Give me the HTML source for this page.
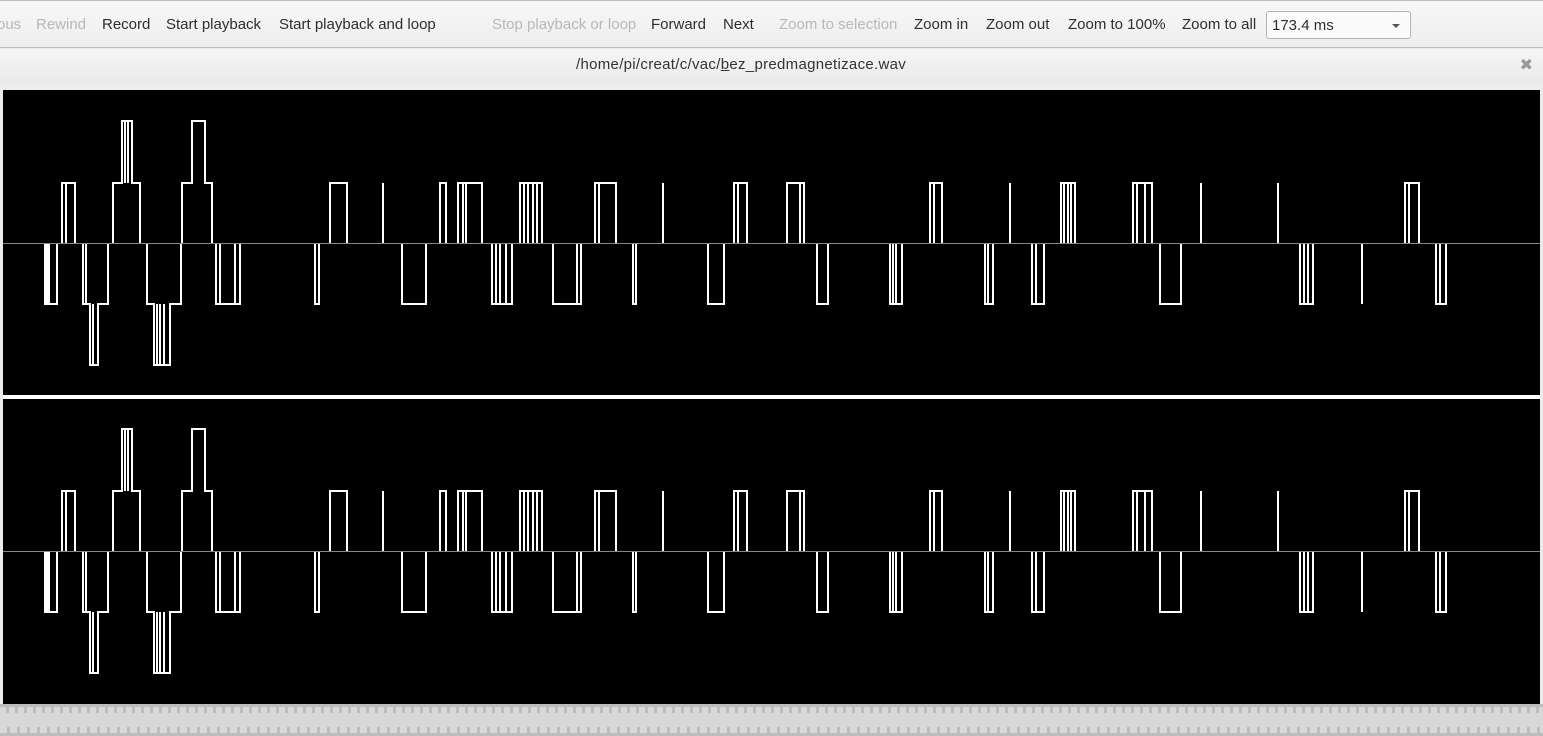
<!DOCTYPE html>
<html><head><meta charset="utf-8"><style>
body{margin:0;width:1543px;height:736px;overflow:hidden;background:#ececec;font-family:"Liberation Sans",sans-serif;position:relative}
#tb{position:absolute;left:0;top:0;width:1543px;height:48px;background:linear-gradient(#f7f7f7,#eeeeee);border-top:1px solid #bdbdbd;border-bottom:1px solid #bdbdbd;box-sizing:border-box}
#tb span{position:absolute;top:15px;font-size:15px;color:#2e2e2e;white-space:nowrap}
#tb span.g{color:#b8b8b8}
#combo{position:absolute;left:1266px;top:10px;width:145px;height:28px;border:1px solid #b4b4b4;border-radius:3px;background:#fafafa;box-sizing:border-box;font-size:15px;color:#2e2e2e;padding:5px 0 0 5px}
#combo:after{content:"";position:absolute;right:10px;top:12px;border-left:4px solid transparent;border-right:4px solid transparent;border-top:4px solid #555}
#title{position:absolute;left:0;top:49px;width:1543px;height:36px;background:linear-gradient(#f6f6f6,#e9e9e9);font-size:15px;color:#333}
#tt{position:absolute;left:576px;top:7px;width:324px;text-align:center;white-space:nowrap;letter-spacing:0.3px}
#x{position:absolute;right:10px;top:6px;color:#999;font-size:16px}
#ruler{position:absolute;left:0;top:704px;width:1543px;height:32px;background:#bdbdbd}
</style></head><body>
<div id="tb">
<span class="g" style="left:-3px">ous</span>
<span class="g" style="left:36px">Rewind</span>
<span style="left:102px">Record</span>
<span style="left:166px">Start playback</span>
<span style="left:279px">Start playback and loop</span>
<span class="g" style="left:492px">Stop playback or loop</span>
<span style="left:651px">Forward</span>
<span style="left:723px">Next</span>
<span class="g" style="left:779px">Zoom to selection</span>
<span style="left:914px">Zoom in</span>
<span style="left:986px">Zoom out</span>
<span style="left:1068px">Zoom to 100%</span>
<span style="left:1182px">Zoom to all</span>
<div id="combo">173.4 ms</div>
</div>
<div id="title"><div id="tt">/home/pi/creat/c/vac/<u>b</u>ez_predmagnetizace.wav</div><span id="x">✖</span></div>
<svg width="1543" height="736" style="position:absolute;left:0;top:0" shape-rendering="crispEdges">
<rect x="3" y="90" width="1537" height="305" fill="#000"/>
<rect x="3" y="399" width="1537" height="305" fill="#000"/>
<rect x="3" y="395" width="1537" height="4" fill="#fff"/>
<defs>
<g id="w" fill="none" stroke="#fff" stroke-width="2">
<path d="M62 243V183H75V243M66 183V243"/>
<path d="M113 243V183H122V121H132V183H140V243M125 121V183M128 121V183"/>
<path d="M182 243V183H192V121H205V183H212V243"/>
<path d="M330 243V183H347V243"/>
<path d="M383 243V183"/><path d="M440 243V183H446V243"/>
<path d="M458 243V183H482V243M463 183V243M466 183V243"/>
<path d="M520 243V183H542V243M524 183V243M528 183V243M533 183V243M537 183V243"/>
<path d="M595 243V183H616V243M599 183V243"/>
<path d="M663 243V183"/>
<path d="M734 243V183H747V243M738 183V243"/>
<path d="M787 243V183H804V243M800 183V243"/>
<path d="M930 243V183H942V243M934 183V243"/>
<path d="M1010 243V183"/>
<path d="M1061 243V183H1075V243M1064 183V243M1068 183V243M1071 183V243"/>
<path d="M1133 243V183H1152V243M1137 183V243M1145 183V243"/>
<path d="M1201 243V183"/><path d="M1278 243V183"/>
<path d="M1405 243V183H1419V243M1409 183V243"/>
<path d="M45 243V304H57V243M47 243V304M49 243V304"/>
<path d="M83 243V304H90V365H98V304H108V243M86 243V304M93 304V365"/>
<path d="M147 243V304H154V365H170V304H181V243M157 304V365M160 304V365M164 304V365"/>
<path d="M216 243V304H240V243M220 243V304M235 243V304"/>
<path d="M315 243V304H319V243"/>
<path d="M402 243V304H426V243"/>
<path d="M492 243V304H512V243M496 243V304M500 243V304M506 243V304"/>
<path d="M553 243V304H581V243M577 243V304"/>
<path d="M633 243V304H636V243"/>
<path d="M708 243V304H724V243"/>
<path d="M817 243V304H828V243"/>
<path d="M890 243V304H902V243M893 243V304M896 243V304"/>
<path d="M985 243V304H993V243M988 243V304"/>
<path d="M1032 243V304H1044V243M1036 243V304"/>
<path d="M1160 243V304H1181V243"/>
<path d="M1300 243V304H1313V243M1304 243V304M1308 243V304"/>
<path d="M1362 243V304"/>
<path d="M1436 243V304H1446V243M1440 243V304"/>
</g>
</defs>
<use href="#w"/>
<use href="#w" transform="translate(0,308)"/>
<rect x="3" y="243" width="1537" height="1" fill="#4caf50"/>
<rect x="3" y="551" width="1537" height="1" fill="#4caf50"/>
</svg>
<div id="ruler">
<div style="position:absolute;left:0;top:9px;width:1543px;height:14px;background:#d8d8d8"></div>
<div style="position:absolute;left:0;top:3px;width:1543px;height:6px;background:repeating-linear-gradient(90deg,#d8d8d8 0 6px,#bdbdbd 6px 9px)"></div>
<div style="position:absolute;left:0;top:23px;width:1543px;height:6px;background:repeating-linear-gradient(90deg,#d8d8d8 0 7px,#bdbdbd 7px 10px)"></div>
</div>
</body></html>
